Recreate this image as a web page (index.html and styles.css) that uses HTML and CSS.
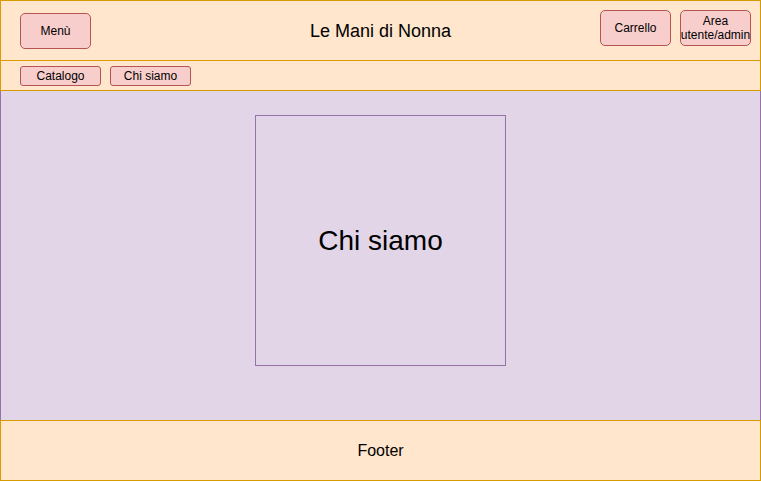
FILE: index.html
```html
<!DOCTYPE html>
<html lang="it">
<head>
<meta charset="utf-8">
<title>Le Mani di Nonna</title>
<link rel="stylesheet" href="styles.css">
</head>
<body>
<div class="page">
  <header class="header">
    <div class="left">
      <div class="btn btn-menu">Menù</div>
    </div>
    <div class="title">Le Mani di Nonna</div>
    <div class="right">
      <div class="btn btn-top">Carrello</div>
      <div class="btn btn-top btn-two">Area<br>utente/admin</div>
    </div>
  </header>
  <nav class="nav">
    <div class="tab">Catalogo</div>
    <div class="tab">Chi siamo</div>
  </nav>
  <main class="main">
    <div class="square">Chi siamo</div>
  </main>
  <footer class="footer">Footer</footer>
</div>
</body>
</html>
```
FILE: styles.css
```css
html, body {
  margin: 0;
  padding: 0;
  background: #ffffff;
}
body {
  font-family: "Liberation Sans", Arial, Helvetica, sans-serif;
  color: #000;
}
.page {
  width: 761px;
  display: flex;
  flex-direction: column;
}
.header {
  box-sizing: border-box;
  height: 61px;
  background: #ffe6cc;
  border: 1px solid #d79b00;
  display: grid;
  grid-template-columns: 1fr auto 1fr;
  align-items: start;
}
.left {
  display: flex;
  padding-left: 19px;
  padding-top: 12px;
}
.right {
  display: flex;
  justify-content: flex-end;
  gap: 9px;
  padding-right: 9px;
  padding-top: 9px;
}
.title {
  font-size: 18px;
  line-height: 20px;
  padding-top: 20px;
  text-align: center;
}
.btn {
  box-sizing: border-box;
  width: 71px;
  height: 36px;
  background: #f8cecc;
  border: 1px solid #b85450;
  border-radius: 5px;
  font-size: 12px;
  display: flex;
  align-items: center;
  justify-content: center;
  text-align: center;
  white-space: nowrap;
}
.btn-two {
  line-height: 14px;
}
.nav {
  box-sizing: border-box;
  height: 31px;
  margin-top: -1px;
  background: #ffe6cc;
  border: 1px solid #d79b00;
  display: flex;
  gap: 9px;
  padding-left: 19px;
  padding-top: 5px;
}
.tab {
  box-sizing: border-box;
  width: 81px;
  height: 20px;
  background: #f8cecc;
  border: 1px solid #b85450;
  border-radius: 3px;
  font-size: 12px;
  display: flex;
  align-items: center;
  justify-content: center;
}
.main {
  box-sizing: border-box;
  height: 329px;
  background: #e1d5e7;
  border-left: 1px solid #9673a6;
  border-right: 1px solid #9673a6;
  display: flex;
  justify-content: center;
  align-items: flex-start;
  padding-top: 24px;
}
.square {
  box-sizing: border-box;
  width: 251px;
  height: 251px;
  border: 1px solid #9673a6;
  font-size: 28px;
  display: flex;
  align-items: center;
  justify-content: center;
}
.footer {
  box-sizing: border-box;
  height: 61px;
  background: #ffe6cc;
  border: 1px solid #d79b00;
  font-size: 16px;
  display: flex;
  align-items: center;
  justify-content: center;
}
```
